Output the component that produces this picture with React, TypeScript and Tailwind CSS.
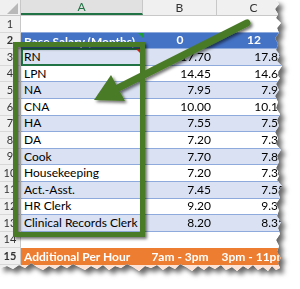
import React from "react";

const data: [string, string, string][] = [
  ["RN", "17.70", "17.85"],
  ["LPN", "14.45", "14.60"],
  ["NA", "7.95", "7.95"],
  ["CNA", "10.00", "10.10"],
  ["HA", "7.55", "7.55"],
  ["DA", "7.20", "7.30"],
  ["Cook", "7.70", "7.80"],
  ["Housekeeping", "7.20", "7.30"],
  ["Act.-Asst.", "7.45", "7.55"],
  ["HR Clerk", "9.20", "9.35"],
  ["Clinical Records Clerk", "8.20", "8.35"],
];

const tornPath =
  "M0,0 L276,0 L279,4 L275,9 L278,14 L276,18 L281,23 L277,28 L279,33 L275,38 L278,44 L276,50 L280,55 L277,61 L282,66 L278,72 L280,78 L276,84 L279,90 L275,96 L278,102 L276,108 L280,114 L277,120 L279,126 L275,132 L278,138 L276,144 L281,150 L277,156 L279,162 L276,168 L280,174 L277,180 L282,186 L278,192 L280,198 L276,204 L279,210 L277,216 L281,222 L278,228 L280,234 L276,240 L279,246 L277,252 L281,258 L278,263 L280,268 L276,270 L272,266 L268,271 L263,267 L258,270 L253,265 L248,269 L243,266 L237,271 L232,267 L226,270 L221,265 L215,269 L209,266 L204,270 L198,266 L192,271 L186,267 L180,264 L175,269 L169,266 L163,270 L157,265 L151,268 L145,266 L139,271 L133,267 L127,264 L121,268 L115,266 L109,270 L103,265 L97,269 L91,266 L85,270 L79,267 L73,264 L67,268 L61,265 L55,269 L49,266 L43,270 L37,267 L31,263 L25,268 L19,265 L13,269 L7,266 L0,268 Z";

function RowNum({ n, last }: { n: number; last?: boolean }) {
  return (
    <div
      className={`w-[21px] shrink-0 h-full flex items-center justify-center bg-[#f0f0f0] border-r border-[#c8c8c8] text-[11px] text-[#333] ${
        last ? "" : "border-b border-b-[#d8d8d8]"
      }`}
    >
      {n}
    </div>
  );
}

export default function App() {
  return (
    <div className="relative w-[300px] h-[289px] bg-white overflow-hidden" style={{ fontFamily: "Lato, 'Open Sans', sans-serif" }}>
      <svg width="0" height="0" className="absolute">
        <defs>
          <clipPath id="torn" clipPathUnits="userSpaceOnUse">
            <path d={tornPath} />
          </clipPath>
        </defs>
      </svg>
      <div className="[filter:drop-shadow(4px_4px_2.5px_rgba(0,0,0,0.6))]">
        <div className="relative w-[300px] h-[289px] bg-white [clip-path:url(#torn)]">
          {/* column header row */}
          <div className="flex h-[16px] bg-[#f0f0f0] border-b border-[#c8c8c8]">
            <div className="relative w-[21px] shrink-0 border-r border-[#c8c8c8]">
              <svg width="21" height="16" className="absolute left-0 top-0">
                <polygon points="18,3 18,14 7,14" fill="#b8b8b8" />
              </svg>
            </div>
            <div className="w-[122px] shrink-0 flex items-center justify-center bg-[#e1e1e1] border-r border-[#c8c8c8] border-b-2 border-b-[#217346] text-[12px] text-[#217346]">
              A
            </div>
            <div className="w-[74px] shrink-0 flex items-center justify-center border-r border-[#c8c8c8] text-[12px] text-[#333]">
              B
            </div>
            <div className="w-[74px] shrink-0 flex items-center justify-center border-r border-[#c8c8c8] text-[12px] text-[#333]">
              C
            </div>
          </div>
          {/* row 1 */}
          <div className="flex h-[16.6px]">
            <RowNum n={1} />
            <div className="w-[270px] bg-white border-b border-[#8ea9db]" />
          </div>
          {/* row 2 header */}
          <div className="flex h-[16.6px] text-white font-bold text-[12px]">
            <RowNum n={2} />
            <div className="relative w-[122px] shrink-0 bg-[#4472c4] flex items-center pt-[3px] px-[3px] border-b border-[#8ea9db] whitespace-nowrap overflow-hidden">
              Base Salary (Months)
              <svg width="5" height="5" className="absolute right-0 top-0">
                <polygon points="0,0 5,0 5,5" fill="#1e9e3a" />
              </svg>
            </div>
            <div className="w-[74px] shrink-0 bg-[#4472c4] flex items-center justify-center border-b border-[#8ea9db]">0</div>
            <div className="w-[74px] shrink-0 bg-[#4472c4] flex items-center justify-center border-b border-[#8ea9db]">12</div>
          </div>
          {data.map((r, i) => {
            const band = i % 2 === 0 ? "bg-[#d9e1f2]" : "bg-white";
            return (
              <div key={r[0]} className="flex h-[16.6px] text-[12px] text-black">
                <RowNum n={i + 3} />
                <div className={`relative w-[122px] shrink-0 ${band} flex items-center px-[3px] border-b border-[#8ea9db] whitespace-nowrap`}>
                  {r[0]}
                  {i === 0 && (
                    <>
                      <div className="absolute left-0 top-[-1px] right-[1px] bottom-[-1px] border-2 border-[#217346]" />
                      <div className="absolute right-[-2px] bottom-[-3px] w-[5px] h-[5px] bg-[#217346] border border-white" />
                      <svg width="5" height="5" className="absolute right-[2px] top-0">
                        <polygon points="0,0 5,0 5,5" fill="#e02020" />
                      </svg>
                    </>
                  )}
                </div>
                <div className={`w-[74px] shrink-0 ${band} flex items-center justify-end pr-[6px] border-b border-[#8ea9db]`}>{r[1]}</div>
                <div className={`w-[74px] shrink-0 ${band} flex items-center justify-end pr-[6px] border-b border-[#8ea9db]`}>{r[2]}</div>
              </div>
            );
          })}
          {/* row 14 */}
          <div className="flex h-[16.6px]">
            <RowNum n={14} />
            <div className="w-[270px] bg-white" />
          </div>
          {/* row 15 */}
          <div className="flex h-[16.6px] text-white font-bold text-[12px]">
            <RowNum n={15} />
            <div className="w-[122px] shrink-0 bg-[#ed7d31] flex items-center px-[3px] whitespace-nowrap">Additional Per Hour</div>
            <div className="w-[74px] shrink-0 bg-[#ed7d31] flex items-center justify-center whitespace-nowrap">7am - 3pm</div>
            <div className="w-[74px] shrink-0 bg-[#ed7d31] flex items-center justify-center whitespace-nowrap">3pm - 11pm</div>
          </div>
          {/* row 16 */}
          <div className="flex h-[16.6px]">
            <RowNum n={16} last />
            <div className="w-[270px] bg-[#fbe2d5]" />
          </div>

          {/* annotation overlay */}
          <svg width="300" height="289" className="absolute left-0 top-0 pointer-events-none">
            <defs>
              <filter id="sh" x="-20%" y="-20%" width="140%" height="140%">
                <feDropShadow dx="2" dy="2" stdDeviation="1.5" floodColor="#000" floodOpacity="0.55" />
              </filter>
            </defs>
            <g filter="url(#sh)">
              <rect x="15.5" y="44.5" width="127" height="190" fill="none" stroke="#4a7a28" strokeWidth="5" />
              <line x1="247" y1="23" x2="116" y2="89" stroke="#4a7a28" strokeWidth="7" strokeLinecap="round" />
              <polygon points="94,100 111,75 125,101" fill="#4a7a28" />
            </g>
          </svg>
        </div>
      </div>
    </div>
  );
}
